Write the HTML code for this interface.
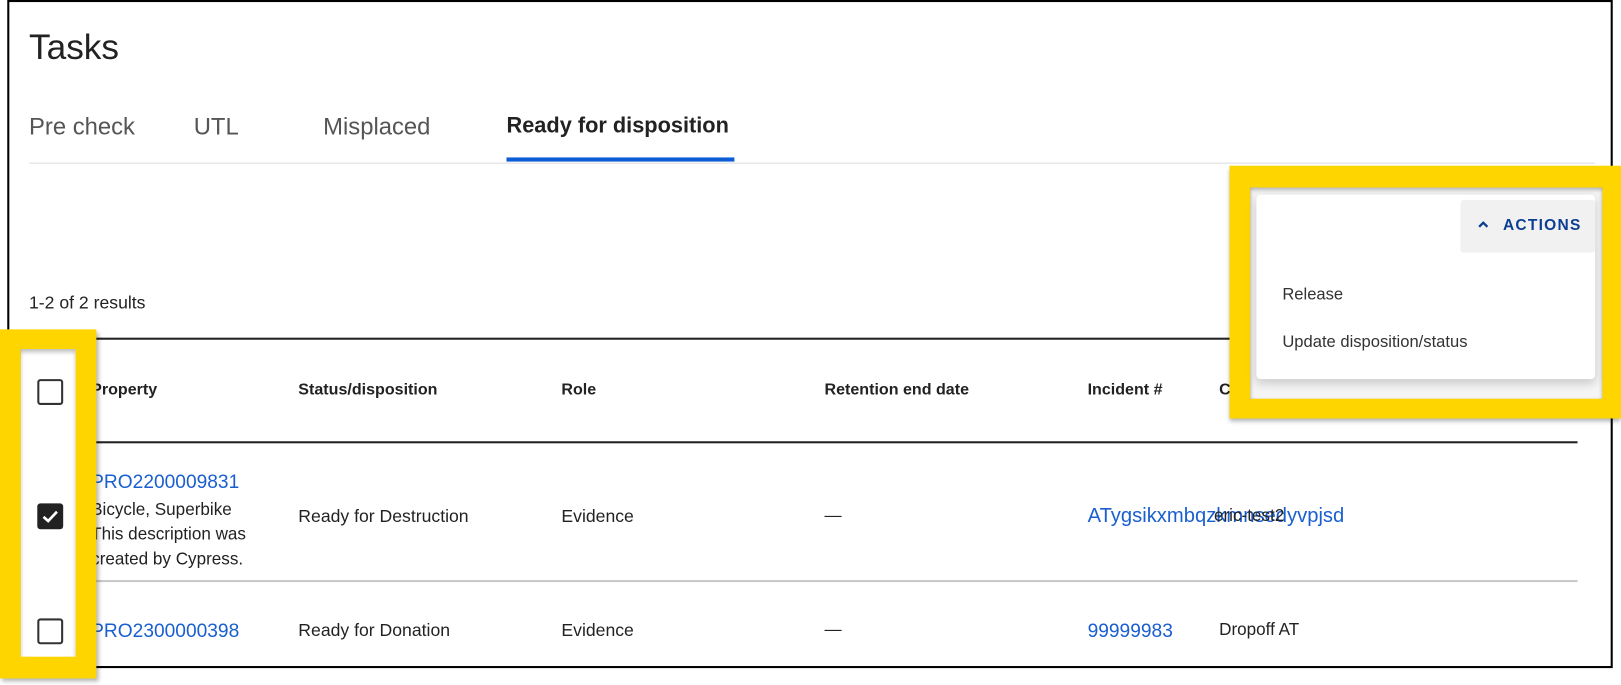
<!DOCTYPE html>
<html><head><meta charset="utf-8"><style>
html,body{margin:0;padding:0;background:#fff;overflow:hidden;width:1621px;height:685px}
#w{position:absolute;left:0;top:0;width:1565px;height:661px;transform:scale(1.0358);transform-origin:0 0;font-family:"Liberation Sans",Arial,sans-serif;color:#222}
.a{position:absolute;white-space:nowrap}
.tab{font-size:23px;color:#555;top:109px}
.h{font-size:15.5px;font-weight:bold;color:#222;top:368px}
.c{font-size:16.5px;color:#222}
.lnk{color:#1a5fd0}
.cb{position:absolute;width:20px;height:20px;border:2px solid #333;border-radius:3px;box-sizing:border-box;left:37px}
</style></head><body><div id="w">
<div class="a" style="left:7px;top:0;width:1546px;height:641px;border:2px solid #000"></div>
<div class="a" style="left:28px;top:27px;font-size:34px;color:#222">Tasks</div>
<div class="a tab" style="left:28px">Pre check</div>
<div class="a tab" style="left:187px">UTL</div>
<div class="a tab" style="left:312px">Misplaced</div>
<div class="a tab" style="left:489px;color:#222;font-weight:bold;font-size:21px;top:110px">Ready for disposition</div>
<div class="a" style="left:28px;top:157px;width:1512px;height:1px;background:#ddd"></div>
<div class="a" style="left:489px;top:152px;width:220px;height:4px;background:#0b5cd5"></div>
<div class="a c" style="left:28px;top:283px;font-size:17px">1-2 of 2 results</div>
<div class="a" style="left:35px;top:326px;width:1488px;height:2px;background:#222"></div>
<div class="a h" style="left:88px">Property</div>
<div class="a h" style="left:288px">Status/disposition</div>
<div class="a h" style="left:542px">Role</div>
<div class="a h" style="left:796px">Retention end date</div>
<div class="a h" style="left:1050px">Incident #</div>
<div class="a h" style="left:1177px">Current location</div>
<div class="a" style="left:35px;top:426px;width:1488px;height:2px;background:#222"></div>
<div class="a lnk" style="left:88px;top:454px;font-size:18.5px">PRO2200009831</div>
<div class="a c" style="left:88px;top:480px;line-height:24px">Bicycle, Superbike<br>This description was<br>created by Cypress.</div>
<div class="a c" style="left:288px;top:489px;font-size:17px">Ready for Destruction</div>
<div class="a c" style="left:542px;top:489px;font-size:17px">Evidence</div>
<div class="a c" style="left:796px;top:489px">—</div>
<div class="a lnk" style="left:1050px;top:487px;font-size:19.5px">ATygsikxmbqzkmnsedyvpjsd</div>
<div class="a c" style="left:1172px;top:489px">eric-test2</div>
<div class="a" style="left:35px;top:560px;width:1488px;height:2px;background:#c8c8c8"></div>
<div class="a lnk" style="left:88px;top:598px;font-size:18.5px">PRO2300000398</div>
<div class="a c" style="left:288px;top:599px;font-size:17px">Ready for Donation</div>
<div class="a c" style="left:542px;top:599px;font-size:17px">Evidence</div>
<div class="a c" style="left:796px;top:599px">—</div>
<div class="a lnk" style="left:1050px;top:598px;font-size:18.5px">99999983</div>
<div class="a c" style="left:1177px;top:599px">Dropoff AT</div>
<!-- left highlight -->
<div class="a" style="left:0;top:318px;width:93px;height:337px;background:#ffd500;box-shadow:2px 3px 4px rgba(0,0,0,.3)"></div>
<div class="a" style="left:20px;top:337px;width:53px;height:297px;background:#fff;box-shadow:inset 0 3px 4px rgba(0,0,0,.25)"></div>
<div class="cb" style="top:366px;left:36px;width:25px;height:25px"></div>
<div class="cb" style="top:486px;left:36px;width:25px;height:25px;background:#222;border-color:#222">
<svg width="21" height="21" viewBox="0 0 21 21" style="position:absolute;left:0;top:0"><path d="M4 11 L8.5 15 L17 6" stroke="#fff" stroke-width="2.6" fill="none"/></svg></div>
<div class="cb" style="top:597px;left:36px;width:25px;height:25px"></div>
<!-- right highlight -->
<div class="a" style="left:1187px;top:160px;width:378px;height:244px;background:#ffd500;box-shadow:0 3px 4px rgba(0,0,0,.3)"></div>
<div class="a" style="left:1207px;top:181px;width:340px;height:204px;background:#f5f5f5;box-shadow:inset 0 2px 4px rgba(0,0,0,.3)"></div>
<div class="a" style="left:1213px;top:188px;width:327px;height:178px;background:#fff;border-radius:4px;box-shadow:0 4px 10px rgba(0,0,0,.18)"></div>
<div class="a" style="left:1410px;top:193px;width:130px;height:51px;background:#f1f1f1;border-radius:3px"></div>
<svg class="a" style="left:1425px;top:211px" width="14" height="12" viewBox="0 0 14 12"><path d="M3 8 L7 4 L11 8" stroke="#0b3d91" stroke-width="2.2" fill="none"/></svg>
<div class="a" style="left:1451px;top:209px;font-size:15px;font-weight:bold;letter-spacing:1.2px;color:#0b3d91">ACTIONS</div>
<div class="a" style="left:1238px;top:276px;font-size:16px;color:#333">Release</div>
<div class="a" style="left:1238px;top:322px;font-size:16px;color:#333">Update disposition/status</div>
</div></body></html>
